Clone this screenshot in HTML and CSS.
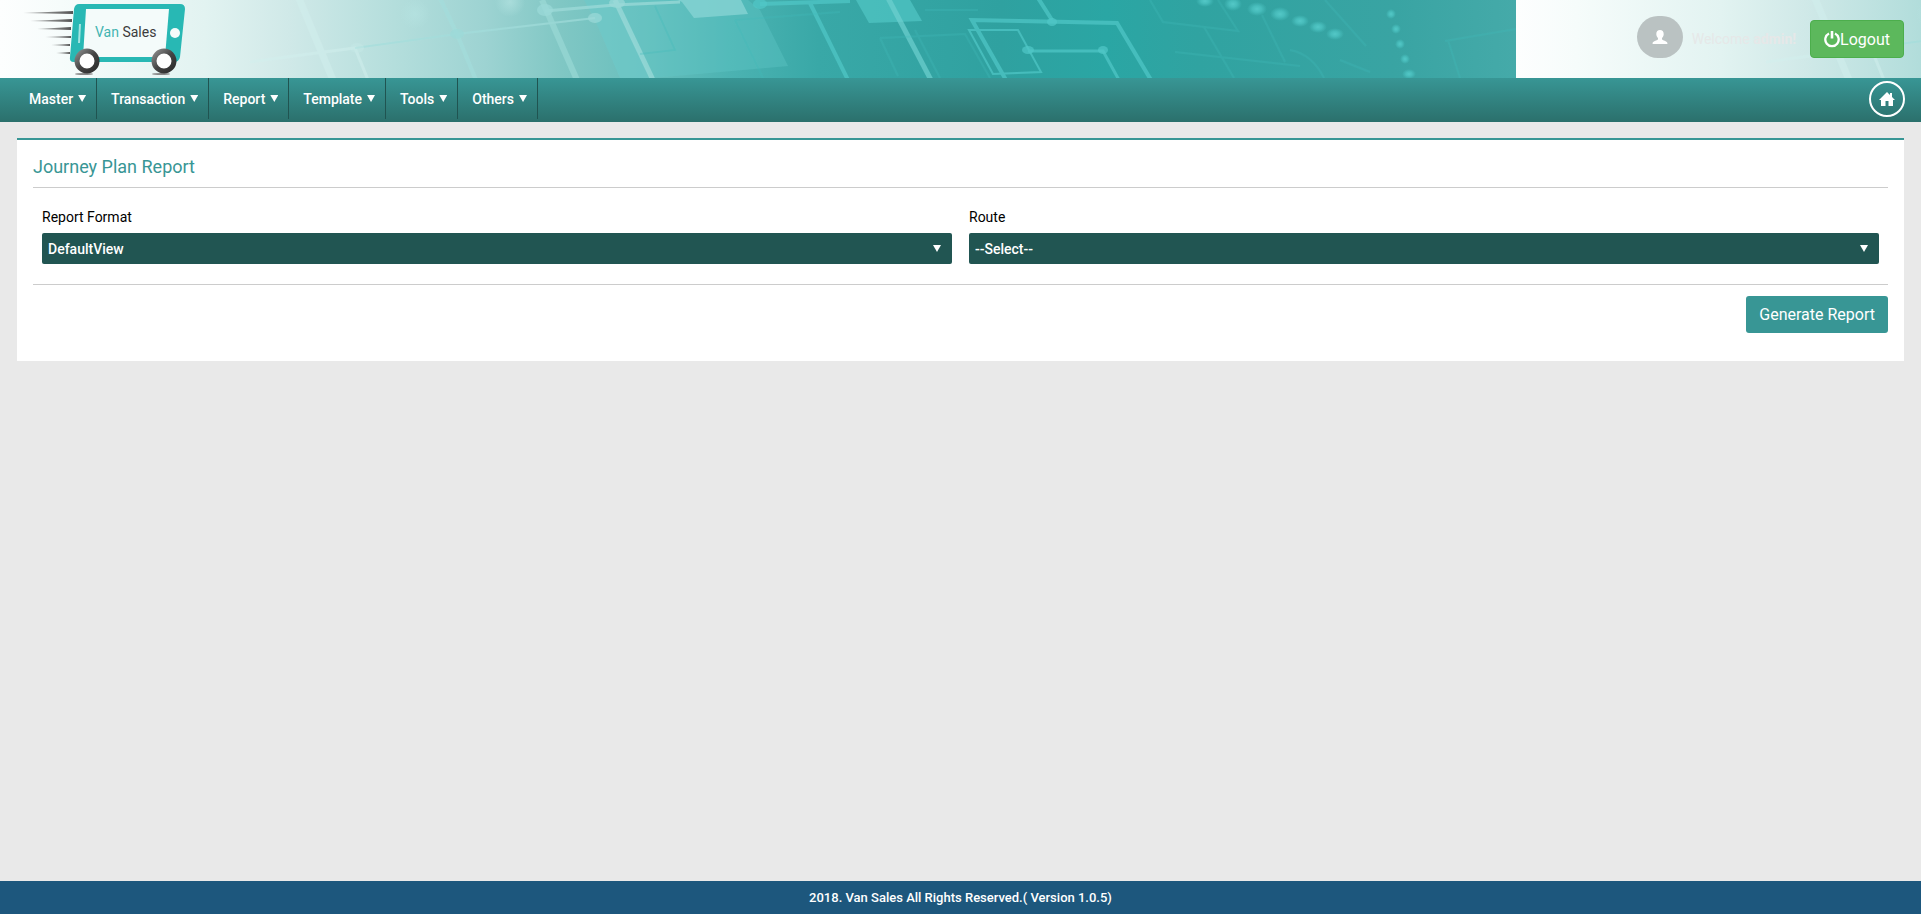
FILE: index.html
```html
<!DOCTYPE html>
<html lang="en">
<head>
<meta charset="utf-8">
<title>Journey Plan Report - Van Sales</title>
<link rel="stylesheet" href="styles.css">
</head>
<body>
<header class="header">
  <svg class="banner" width="100%" height="78" aria-hidden="true">
    <defs>
      <linearGradient id="sea" gradientUnits="userSpaceOnUse" x1="0" y1="0" x2="1516" y2="0">
        <stop offset="0" stop-color="#fdfefe"/>
        <stop offset=".04" stop-color="#f6fcfb"/>
        <stop offset=".135" stop-color="#e2f3f1"/>
        <stop offset=".19" stop-color="#d0e9e8"/>
        <stop offset=".26" stop-color="#b4dedc"/>
        <stop offset=".32" stop-color="#9dd3d2"/>
        <stop offset=".37" stop-color="#80c7c4"/>
        <stop offset=".43" stop-color="#66bebc"/>
        <stop offset=".48" stop-color="#4cb3b2"/>
        <stop offset=".54" stop-color="#39a8a7"/>
        <stop offset=".66" stop-color="#2fa1a0"/>
        <stop offset=".73" stop-color="#2aa6a4"/>
        <stop offset=".79" stop-color="#30a3a1"/>
        <stop offset=".92" stop-color="#39a4a3"/>
        <stop offset="1" stop-color="#45aaa9"/>
      </linearGradient>
      <radialGradient id="glow">
        <stop offset="0" stop-color="#54c8c7"/>
        <stop offset=".45" stop-color="#4cc2c1" stop-opacity=".8"/>
        <stop offset="1" stop-color="#48bfbe" stop-opacity="0"/>
      </radialGradient>
      <radialGradient id="haze">
        <stop offset="0" stop-color="#b8e6e4"/>
        <stop offset="1" stop-color="#b8e6e4" stop-opacity="0"/>
      </radialGradient>
      <pattern id="circuit" patternUnits="userSpaceOnUse" width="1516" height="78">
        <rect width="1516" height="78" fill="url(#sea)"/>
        <path d="M584 0L595 20 620 78H652L615 0Z" fill="#6ccac9" opacity=".6"/>
        <path d="M615 0L652 78 788 66 760 10 748 0Z" fill="#62c8c8" opacity=".35"/>
        <path d="M678 0L682 2 694 18 748 14 741 0Z" fill="#86d3d3" opacity=".8"/>
        <path d="M856 0L869 23 922 21 910 0Z" fill="#4fc4c3" opacity=".75"/>
        <circle cx="415" cy="14" r="15" fill="url(#haze)" opacity=".5"/>
        <circle cx="510" cy="2" r="15" fill="url(#haze)" opacity=".6"/>
        <g fill="none" stroke="#d2efed" opacity=".5">
          <path d="M298-4L333 80" stroke-width="7"/>
          <path d="M250 62Q300 55 355 48L368 80" stroke-width="3"/>
        </g>
        <g fill="none" stroke="#a2dedc" opacity=".65">
          <path d="M355 48L457 34 595 18" stroke-width="2"/>
          <path d="M440-2L457 34 476 80" stroke-width="4"/>
          <path d="M542 0L577 80" stroke-width="6" opacity=".75"/>
          <path d="M545 11L615 5 680 2" stroke-width="3"/>
          <path d="M615 0L653 80" stroke-width="5"/>
        </g>
        <g fill="#9bdad8" opacity=".7">
          <ellipse cx="357" cy="48" rx="7" ry="5" fill="#c4e8e6" opacity=".6"/>
          <ellipse cx="457" cy="34" rx="7" ry="5"/>
          <ellipse cx="545" cy="10" rx="8" ry="6"/>
          <ellipse cx="595" cy="18" rx="7" ry="5"/>
          <ellipse cx="617" cy="3" rx="8" ry="5"/>
        </g>
        <g fill="none" stroke="#4fc8c7" opacity=".7">
          <path d="M760 4L850 1M810 3L848 80M1038-2L1052 20" stroke-width="4"/>
          <path d="M888-2L931 80" stroke="#6ed0cf" stroke-width="5"/>
          <path d="M1006 80L972 20 1117 23 1151 80" stroke-width="4"/>
          <path d="M969 30H1018L1041 72 993 74Z" stroke-width="2"/>
          <path d="M1028 51H1103L1119 80" stroke-width="3"/>
        </g>
        <g fill="#4fc8c7" opacity=".7">
          <ellipse cx="760" cy="4" rx="7" ry="5"/>
          <ellipse cx="1028" cy="50" rx="6" ry="4"/>
          <ellipse cx="1052" cy="22" rx="5" ry="4"/>
          <ellipse cx="1103" cy="50" rx="5" ry="4"/>
        </g>
        <g fill="none" stroke="#3fb9b7" stroke-width="2" opacity=".3">
          <path d="M655 6L675 50 640 54M735 20L763 78M735 20L840 12M880 38L898 76M880 38L965 34 990 78M915 30L940 78M925 10H978"/>
          <path d="M1150 0L1163 22 1238 31 1218 0M1204 27L1234 78M1175 52L1300 66M1325 0L1366 46M1262 15L1285 62"/>
          <path d="M1290 50Q1312 54 1324 78M1340 60L1370 72M1445 41L1516 29M1448 40L1460 78"/>
        </g>
        <g fill="url(#glow)">
          <ellipse cx="1205" cy="1" rx="9" ry="6"/>
          <ellipse cx="1233" cy="4" rx="9" ry="7"/>
          <ellipse cx="1257" cy="9" rx="10" ry="7"/>
          <ellipse cx="1280" cy="14" rx="10" ry="7"/>
          <ellipse cx="1300" cy="21" rx="9" ry="6"/>
          <ellipse cx="1318" cy="27" rx="9" ry="6"/>
          <ellipse cx="1335" cy="34" rx="9" ry="6"/>
          <circle cx="1391" cy="14" r="5"/>
          <circle cx="1396" cy="29" r="5"/>
          <circle cx="1400" cy="44" r="5"/>
          <circle cx="1405" cy="59" r="5"/>
          <ellipse cx="1409" cy="74" rx="7" ry="5"/>
        </g>
      </pattern>
    </defs>
    <rect width="100%" height="78" fill="url(#circuit)"/>
  </svg>

  <a class="logo" href="#" aria-label="Van Sales">
    <svg width="164" height="76" viewBox="22 0 164 76">
      <defs>
        <linearGradient id="trail"><stop offset="0" stop-color="#555" stop-opacity=".4"/><stop offset="1" stop-color="#555"/></linearGradient>
        <linearGradient id="tyre" x1="0" y1="0" x2="1" y2="1"><stop offset="0" stop-color="#8a8a8a"/><stop offset=".5" stop-color="#444"/><stop offset="1" stop-color="#2d2d2d"/></linearGradient>
      </defs>
      <g fill="url(#trail)">
        <path d="M23 13L73 11V14Z"/><path d="M30 21L72 19V22Z"/><path d="M37 29L71 27V30Z"/>
        <path d="M45 37L71 36V38Z"/><path d="M51 45L70 44V46Z"/><path d="M56 53L70 52V54Z"/>
      </g>
      <ellipse cx="84" cy="74" rx="9" ry="1" fill="#888"/><ellipse cx="161" cy="74" rx="9" ry="1" fill="#888"/>
      <path d="M79 4H180Q185 4 185 9L180 57Q179 62 174 62H74Q69 62 70 57L74 9Q75 4 79 4Z" fill="#28b8b4"/>
      <path d="M86 9H169L165 57H83Z" fill="#f4fbfa"/>
      <path d="M80 24L79 43" stroke="#a5e4e1" stroke-width="2"/>
      <ellipse cx="175" cy="33" rx="5" ry="5" fill="#f4fbfa"/>
      <circle cx="87" cy="61" r="10" fill="#fff" stroke="url(#tyre)" stroke-width="5"/>
      <circle cx="164" cy="61" r="10" fill="#fff" stroke="url(#tyre)" stroke-width="5"/>
      <text class="logo-text" x="95" y="37"><tspan fill="#43b4b1">Van</tspan> <tspan fill="#3c3c3c">Sales</tspan></text>
    </svg>
  </a>

  <div class="account">
    <span class="avatar">
      <svg width="16" height="16" viewBox="0 0 16 16" fill="#fff" aria-hidden="true"><path d="M8 1C5.700 1 4.300 2.600 4.300 5c0 1.700.7 3.200 1.700 4v1.200C5.600 11.600 1 11.700.6 14v1h14.800v-1C15 11.700 10.400 11.600 10 10.200V9c1-.8 1.700-2.300 1.700-4C11.700 2.600 10.300 1 8 1Z"/></svg>
    </span>
    <span class="welcome">Welcome <b>admin!</b></span>
    <button class="logout" type="button"><svg width="16" height="17" viewBox="0 0 16 17" fill="none" stroke="#fff" aria-hidden="true"><path d="M5 2.500a6.700 6.700 0 1 0 6 0" stroke-width="2.300"/><path d="M8 0v7.500" stroke-width="2.600"/></svg>Logout</button>
  </div>
</header>

<nav class="nav">
  <ul class="menu">
    <li><a href="#">Master<i class="caret"></i></a></li>
    <li><a href="#">Transaction<i class="caret"></i></a></li>
    <li><a href="#">Report<i class="caret"></i></a></li>
    <li><a href="#">Template<i class="caret"></i></a></li>
    <li><a href="#">Tools<i class="caret"></i></a></li>
    <li><a href="#">Others<i class="caret"></i></a></li>
  </ul>
  <a class="home" href="#" aria-label="Home">
    <svg width="16" height="16" viewBox="0 0 16 16" fill="#fff" aria-hidden="true"><path d="M8 1L0 9H2V15H6.500V10H9.500V15H14V9H16L13 6V2H11V4Z"/></svg>
  </a>
</nav>

<main class="panel">
  <h1 class="title">Journey Plan Report</h1>
  <form class="form">
    <div class="fields">
      <div class="field">
        <label for="format">Report Format</label>
        <div class="select"><select id="format"><option>DefaultView</option></select><i class="caret"></i></div>
      </div>
      <div class="field">
        <label for="route">Route</label>
        <div class="select"><select id="route"><option>--Select--</option></select><i class="caret"></i></div>
      </div>
    </div>
    <div class="actions"><button class="generate" type="button">Generate Report</button></div>
  </form>
</main>

<footer class="footer">2018. Van Sales All Rights Reserved.( Version 1.0.5)</footer>
</body>
</html>
```

FILE: styles.css
```css
* { box-sizing: border-box; }

body {
  display: flex;
  flex-direction: column;
  min-height: 100vh;
  margin: 0;
  background: #e9e9e9;
  color: #000;
  font: 14px/20px Roboto, sans-serif;
}

button, select { font-family: inherit; }

/* Header */
.header {
  position: relative;
  display: flex;
  justify-content: space-between;
  height: 78px;
  padding: 0 17px 0 22px;
}

.banner {
  position: absolute;
  inset: 0;
}

.logo, .account { position: relative; }
.logo svg { display: block; }
.logo-text { font: 400 14px Roboto, sans-serif; }

.account {
  display: flex;
  align-items: center;
}

.avatar {
  display: flex;
  align-items: center;
  justify-content: center;
  width: 46px;
  height: 42px;
  margin: 0 9px 4px 0;
  border-radius: 21px;
  background: #bac2c2;
}

.welcome {
  margin-right: 14px;
  color: #e6e8e8;
}

.logout {
  display: flex;
  align-items: center;
  height: 38px;
  padding: 0 13px;
  border: 1px solid #4cae4c;
  border-radius: 4px;
  background: #5cb85c;
  color: #fff;
  font-size: 16px;
}

/* Navigation */
.nav {
  display: flex;
  justify-content: space-between;
  height: 44px;
  padding: 0 16px 0 15px;
  background: linear-gradient(#389695, #2b706c);
}

.menu {
  display: flex;
  margin: 0;
  padding: 0;
  list-style: none;
}

.menu a {
  display: flex;
  align-items: center;
  gap: 5px;
  height: 41px;
  padding: 0 10px 0 14px;
  border-right: 1px solid #205451;
  color: #fff;
  font-weight: 500;
  text-decoration: none;
}

.caret {
  width: 8px;
  height: 7px;
  background: #fff;
  clip-path: polygon(0 0, 100% 0, 50% 100%);
}

.home {
  display: flex;
  align-items: center;
  justify-content: center;
  width: 36px;
  height: 36px;
  margin-top: 3px;
  border: 2px solid #fff;
  border-radius: 50%;
}

/* Report panel */
.panel {
  margin: 16px 17px;
  padding: 17px 16px 28px;
  border-top: 2px solid #389695;
  background: #fff;
}

.title {
  margin: 0;
  padding-bottom: 10px;
  border-bottom: 1px solid #ccc;
  color: #389695;
  font-size: 18px;
  font-weight: 400;
  line-height: 20px;
}

.fields {
  display: flex;
  gap: 17px;
  padding: 19px 9px 20px;
  border-bottom: 1px solid #ccc;
}

.field { flex: 1; }

.field label {
  display: block;
  margin-bottom: 6px;
}

.select { position: relative; }

.select select {
  display: block;
  width: 100%;
  height: 31px;
  padding: 0 24px 0 6px;
  border: 0;
  border-radius: 2px;
  appearance: none;
  background: #215552;
  color: #fff;
  font-size: 14px;
  font-weight: 500;
}

.select .caret {
  position: absolute;
  top: 12px;
  right: 11px;
  pointer-events: none;
}

.actions {
  display: flex;
  justify-content: flex-end;
  padding-top: 11px;
}

.generate {
  height: 37px;
  padding: 0 13px;
  border: 0;
  border-radius: 3px;
  background: #389695;
  color: #fff;
  font-size: 16px;
}

/* Footer */
.footer {
  margin-top: auto;
  padding: 7px 0 6px;
  background: #1d577d;
  color: #fff;
  font-size: 13px;
  font-weight: 500;
  text-align: center;
}
```
